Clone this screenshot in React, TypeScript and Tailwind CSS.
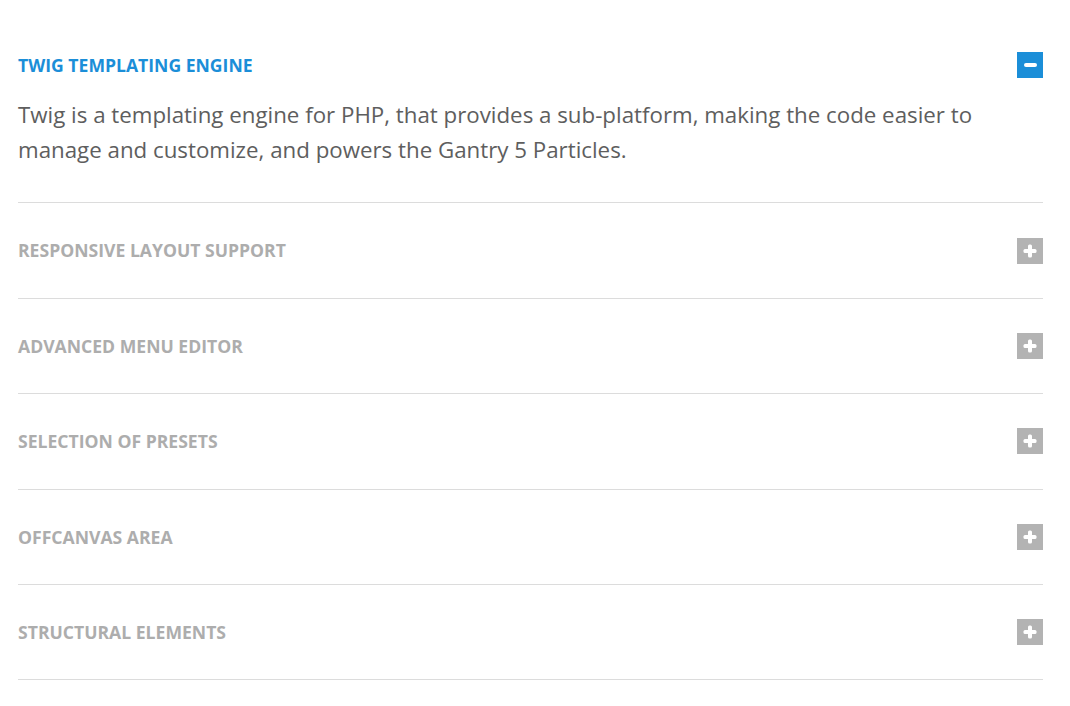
import { useState } from 'react'

const items = [
  {
    title: 'Twig Templating Engine',
    body: 'Twig is a templating engine for PHP, that provides a sub-platform, making the code easier to manage and customize, and powers the Gantry 5 Particles.',
  },
  { title: 'Responsive Layout Support', body: '' },
  { title: 'Advanced Menu Editor', body: '' },
  { title: 'Selection of Presets', body: '' },
  { title: 'Offcanvas Area', body: '' },
  { title: 'Structural Elements', body: '' },
]

function ToggleIcon({ open }: { open: boolean }) {
  return (
    <span
      className={`flex h-[26px] w-[26px] shrink-0 items-center justify-center ${
        open ? 'bg-[#1b8ed8]' : 'bg-[#b3b3b3]'
      }`}
    >
      {open ? (
        <span className="h-[4px] w-[13px] rounded-[2px] bg-white" />
      ) : (
        <svg width="14" height="14" viewBox="0 0 14 14">
          <rect x="5" y="0.5" width="4" height="13" rx="1.5" fill="#fff" />
          <rect x="0.5" y="5" width="13" height="4" rx="1.5" fill="#fff" />
        </svg>
      )}
    </span>
  )
}

export default function App() {
  const [openIdx, setOpenIdx] = useState<number>(0)

  return (
    <div
      className="min-h-[706px] bg-white px-[18px] pt-[18px]"
      style={{ fontFamily: '"Open Sans", "Liberation Sans", sans-serif' }}
    >
      <div className="w-[1025px]">
        {items.map((item, i) => {
          const open = openIdx === i
          return (
            <div key={item.title} className="border-b border-[#dcdcdc]">
              <button
                onClick={() => setOpenIdx(open ? -1 : i)}
                className="flex w-full items-center justify-between py-[34px] text-left"
              >
                <span
                  className={`text-[17.6px] font-bold uppercase ${
                    open ? 'text-[#1b8ed8]' : 'text-[#adadad]'
                  }`}
                >
                  {item.title}
                </span>
                <ToggleIcon open={open} />
              </button>
              {open && item.body && (
                <p className="-mt-[15px] pb-[35px] text-[22.3px] leading-[35px] text-[#5e5e5e]">
                  {item.body}
                </p>
              )}
            </div>
          )
        })}
      </div>
    </div>
  )
}
